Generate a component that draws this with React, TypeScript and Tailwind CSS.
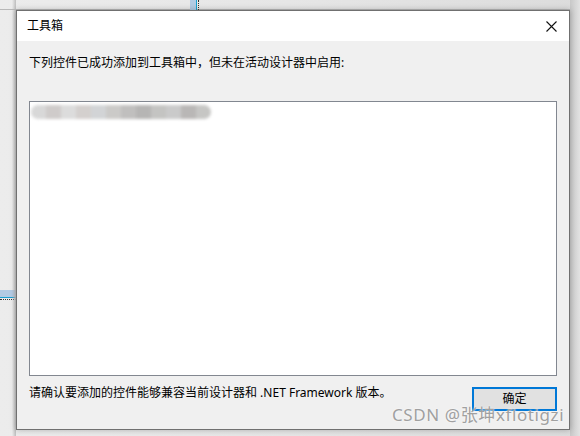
import React from "react";

const font = {
  fontFamily: '"Noto Sans", "Noto Sans CJK SC", sans-serif',
};

export default function App() {
  const blobs = [
    "#d8d8d8", "#cfcbca", "#dcdcdc", "#d4d0ce", "#d2d4d6", "#cbcac8",
    "#c0bfbe", "#b6b5b4", "#c4c4c2", "#cacaca", "#b9b7b6", "#c6c6c4",
  ];
  return (
    <div
      className="relative w-[580px] h-[436px] overflow-hidden bg-gradient-to-r from-[#ececec] via-[#e6e6e6] to-[#dcdcdc]"
      style={font}
    >
      {/* background window decorations behind the dialog */}
      <div className="absolute left-0 top-[9px] w-[580px] h-[1px] bg-[#b8b8b8]" />
      <div className="absolute left-[190px] top-0 flex h-[10px]">
        <div className="w-[6px] bg-[#b3cbe4]" />
        <div className="w-[1px] bg-[#1a9fd0]" />
        <div className="w-[1px] ml-[1px] border-l border-dotted border-[#333]" />
      </div>
      <div className="absolute left-0 top-[290px] flex flex-col w-[16px]">
        <div className="h-[7px] bg-[#b3cbe4]" />
        <div className="h-[1px] bg-[#1a9fd0]" />
        <div className="h-[1px] mt-[1px] border-t border-dotted border-[#333]" />
      </div>
      <div className="absolute left-[12px] top-0 w-[4px] h-[436px] bg-gradient-to-r from-transparent to-[#bdbdbd]" />
      <div className="absolute left-[570px] top-0 w-[10px] h-[436px] bg-gradient-to-r from-[#c8c8c8] to-[#e2e2e2]" />

      {/* dialog */}
      <div className="relative ml-[16px] mt-[10px] w-[554px] h-[420px] border border-[#707070] bg-[#f0f0f0] flex flex-col shadow-[0_0_6px_rgba(0,0,0,0.25)]">
        <div className="h-[30px] bg-white flex items-center justify-between pl-[10px] pr-[10px]">
          <span className="text-[12px] text-black leading-none">工具箱</span>
          <svg width="11" height="11" viewBox="0 0 11 11" className="mr-[2px]">
            <path d="M0.5 0.5 L10.5 10.5 M10.5 0.5 L0.5 10.5" stroke="#111" strokeWidth="1.1" fill="none" />
          </svg>
        </div>
        <div className="flex-1 flex flex-col px-[12px] pt-[14px]">
          <div className="text-[12px] leading-[16px] text-black">
            下列控件已成功添加到工具箱中，但未在活动设计器中启用:
          </div>
          <div className="mt-[30px] h-[275px] border border-[#828790] bg-white overflow-hidden">
            <div className="ml-[1px] mt-[3px] flex blur-[1.5px] h-[14px] w-[180px] rounded-full overflow-hidden">
              {blobs.map((c, i) => (
                <div key={i} className="flex-1 h-full" style={{ background: c }} />
              ))}
            </div>
          </div>
          <div className="mt-[11px] flex items-start justify-between">
            <span className="text-[12px] leading-[16px] mt-[-2px] text-black">
              请确认要添加的控件能够兼容当前设计器和 .NET Framework 版本。
            </span>
            <button className="w-[85px] h-[24px] border-2 border-[#0078d7] bg-[#e1e1e1] text-[12px] text-black flex items-center justify-center">
              确定
            </button>
          </div>
        </div>
      </div>

      {/* watermark */}
      <div className="absolute left-[392px] top-[405px] text-[17px] leading-[20px] text-[#a0a0a0] tracking-[0.6px] [text-shadow:0_0_2px_#fff]">
        CSDN @张坤xflotigzi
      </div>
    </div>
  );
}
